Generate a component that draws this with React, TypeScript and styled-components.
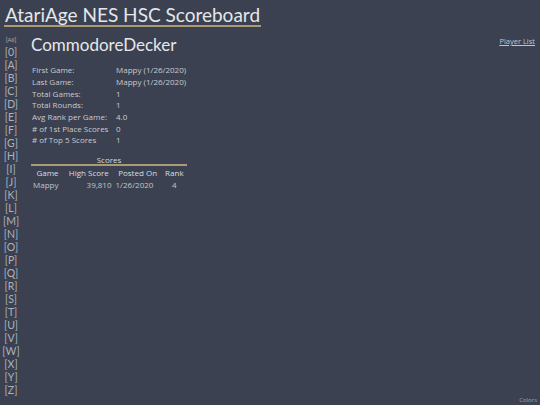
import React from "react";
import styled, { createGlobalStyle } from "styled-components";

const Global = createGlobalStyle`
  html, body { margin: 0; padding: 0; background: #3b4150; }
  body { font-family: "Lato", "Liberation Sans", sans-serif; color: #d4d6da; }
`;

const Page = styled.div`
  width: 540px;
  height: 405px;
  background: #3b4150;
  position: relative;
  overflow: hidden;
`;

const Header = styled.h1`
  display: inline-block;
  margin: 4px 0 0 4px;
  padding: 0 1px 0 1px;
  font-size: 19px;
  font-weight: 400;
  color: #e6e7ea;
  line-height: 21px;
  border-bottom: 2px solid #a89b76;
`;

const Body = styled.div`
  display: flex;
  padding-top: 9px;
`;

const Nav = styled.nav`
  display: flex;
  flex-direction: column;
  align-items: center;
  width: 22px;
`;

const NavLink = styled.a<{ $small?: boolean }>`
  color: #aeb2bb;
  text-decoration: none;
  font-size: ${(p) => (p.$small ? "6px" : "10.5px")};
  line-height: ${(p) => (p.$small ? "8px" : "13px")};
  margin-bottom: ${(p) => (p.$small ? "2px" : "0")};
`;

const Main = styled.main`
  flex: 1;
  padding-left: 9px;
  padding-right: 5px;
  font-family: "Open Sans", "Liberation Sans", sans-serif;
`;

const TopRow = styled.div`
  display: flex;
  justify-content: space-between;
  align-items: flex-start;
  margin-top: -1px;
`;

const Name = styled.h2`
  margin: 0;
  font-family: "Lato", "Liberation Sans", sans-serif;
  font-size: 17px;
  font-weight: 400;
  color: #e6e7ea;
  line-height: 20px;
`;

const PlayerList = styled.a`
  font-size: 7.5px;
  color: #c2c5cb;
  text-decoration: underline;
  margin-top: 1px;
`;

const Stats = styled.table`
  border-collapse: collapse;
  margin-top: 9px;
  margin-left: 1px;
  font-size: 8px;
  color: #c9cbd0;
`;

const StatLabel = styled.td`
  padding: 0;
  width: 84px;
  height: 11.7px;
  white-space: nowrap;
`;

const StatValue = styled.td`
  padding: 0;
  height: 11.7px;
  white-space: nowrap;
`;

const Scores = styled.table`
  border-collapse: collapse;
  margin-top: 9px;
  width: 156px;
  font-size: 8px;
`;

const Caption = styled.caption`
  color: #d8dade;
  border-bottom: 2px solid #a89b76;
  line-height: 9px;
  padding: 0;
`;

const Th = styled.th`
  font-weight: 400;
  color: #dcdee2;
  padding: 1px 2px 0;
  text-align: center;
  white-space: nowrap;
`;

const Td = styled.td<{ $align?: string }>`
  color: #c2c5cb;
  padding: 1px 2px 0;
  text-align: ${(p) => p.$align || "left"};
  white-space: nowrap;
`;

const Colors = styled.a`
  position: absolute;
  right: 3px;
  bottom: 1px;
  font-family: "Open Sans", "Liberation Sans", sans-serif;
  font-size: 6px;
  color: #9ea2ab;
  text-decoration: none;
`;

const letters = ["0", ..."ABCDEFGHIJKLMNOPQRSTUVWXYZ".split("")];

const stats: [string, string][] = [
  ["First Game:", "Mappy (1/26/2020)"],
  ["Last Game:", "Mappy (1/26/2020)"],
  ["Total Games:", "1"],
  ["Total Rounds:", "1"],
  ["Avg Rank per Game:", "4.0"],
  ["# of 1st Place Scores", "0"],
  ["# of Top 5 Scores", "1"],
];

export default function App() {
  return (
    <>
      <Global />
      <Page>
        <Header>AtariAge NES HSC Scoreboard</Header>
        <Body>
          <Nav>
            <NavLink $small>[All]</NavLink>
            {letters.map((l) => (
              <NavLink key={l}>[{l}]</NavLink>
            ))}
          </Nav>
          <Main>
            <TopRow>
              <Name>CommodoreDecker</Name>
              <PlayerList>Player List</PlayerList>
            </TopRow>
            <Stats>
              <tbody>
                {stats.map(([k, v]) => (
                  <tr key={k}>
                    <StatLabel>{k}</StatLabel>
                    <StatValue>{v}</StatValue>
                  </tr>
                ))}
              </tbody>
            </Stats>
            <Scores>
              <Caption>Scores</Caption>
              <thead>
                <tr>
                  <Th>Game</Th>
                  <Th>High Score</Th>
                  <Th>Posted On</Th>
                  <Th>Rank</Th>
                </tr>
              </thead>
              <tbody>
                <tr>
                  <Td>Mappy</Td>
                  <Td $align="right">39,810</Td>
                  <Td>1/26/2020</Td>
                  <Td $align="center">4</Td>
                </tr>
              </tbody>
            </Scores>
          </Main>
        </Body>
        <Colors>Colors</Colors>
      </Page>
    </>
  );
}
